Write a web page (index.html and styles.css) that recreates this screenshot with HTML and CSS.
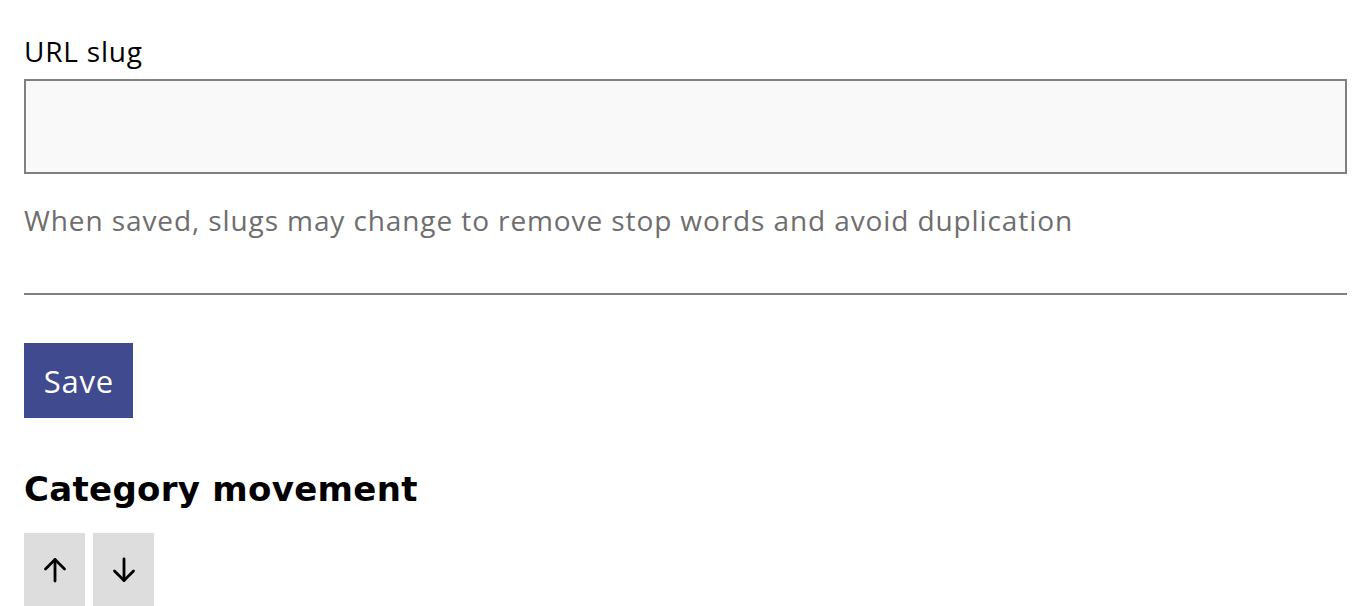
FILE: index.html
```html
<!DOCTYPE html>
<html lang="en">
<head>
<meta charset="utf-8">
<title>Category settings</title>
<link rel="stylesheet" href="styles.css">
</head>
<body>
<main class="page">
  <form class="form">
    <div class="field">
      <label class="label" for="slug">URL slug</label>
      <input class="input" id="slug" type="text">
      <p class="help">When saved, slugs may change to remove stop words and avoid duplication</p>
    </div>
    <hr class="divider">
    <div class="actions">
      <button class="btn-primary" type="button">Save</button>
    </div>
  </form>
  <section class="movement">
    <h2 class="heading">Category movement</h2>
    <div class="move-buttons">
      <button class="btn-move" type="button" aria-label="Move up">
        <svg width="24" height="26" viewBox="0 0 24 26" fill="none" stroke="#000" stroke-width="2.8" stroke-linecap="round" stroke-linejoin="round"><path d="M12 24V2.5"/><path d="M2.5 12L12 2.5 21.5 12"/></svg>
      </button>
      <button class="btn-move" type="button" aria-label="Move down">
        <svg width="24" height="26" viewBox="0 0 24 26" fill="none" stroke="#000" stroke-width="2.8" stroke-linecap="round" stroke-linejoin="round"><path d="M12 2v21.5"/><path d="M2.5 14L12 23.5 21.5 14"/></svg>
      </button>
    </div>
  </section>
</main>
</body>
</html>
```
FILE: styles.css
```css
* { box-sizing: border-box; }
html, body { margin: 0; padding: 0; background: #fff; }
body { font-family: "Open Sans", Lato, sans-serif; color: #000; }
.page { padding: 33px 23px 0 24px; }
.form { margin: 0; }
.field { display: flex; flex-direction: column; }
.label { font-size: 28px; line-height: 36px; margin-bottom: 10px; letter-spacing: 0.8px; }
.input {
  display: block;
  width: 100%;
  height: 95px;
  border: 2px solid #808080;
  background: #f9f9f9;
  font: inherit;
  font-size: 28px;
  padding: 0 16px;
  margin: 0;
}
.help { margin: 28px 0 0 0; font-size: 28px; line-height: 36px; color: #6e6e6e; letter-spacing: 0.9px; }
.divider { margin: 55px 0 0 0; border: 0; border-top: 2px solid #808080; height: 0; }
.actions { margin-top: 48px; }
.btn-primary {
  background: #404a8f;
  color: #fff;
  border: 0;
  font-family: inherit;
  font-size: 31px;
  letter-spacing: 0.8px;
  text-indent: 0.8px;
  width: 109px;
  height: 75px;
  padding: 0;
  cursor: pointer;
}
.movement { margin-top: 49px; }
.heading { margin: 0; font-family: "DejaVu Sans", Inter, sans-serif; font-size: 34px; font-weight: 700; line-height: 44px; letter-spacing: 0.3px; }
.move-buttons { display: flex; gap: 8px; margin-top: 22px; }
.btn-move {
  width: 61px;
  height: 74px;
  background: #dddddd;
  border: 0;
  padding: 0;
  display: flex;
  align-items: center;
  justify-content: center;
}
```
